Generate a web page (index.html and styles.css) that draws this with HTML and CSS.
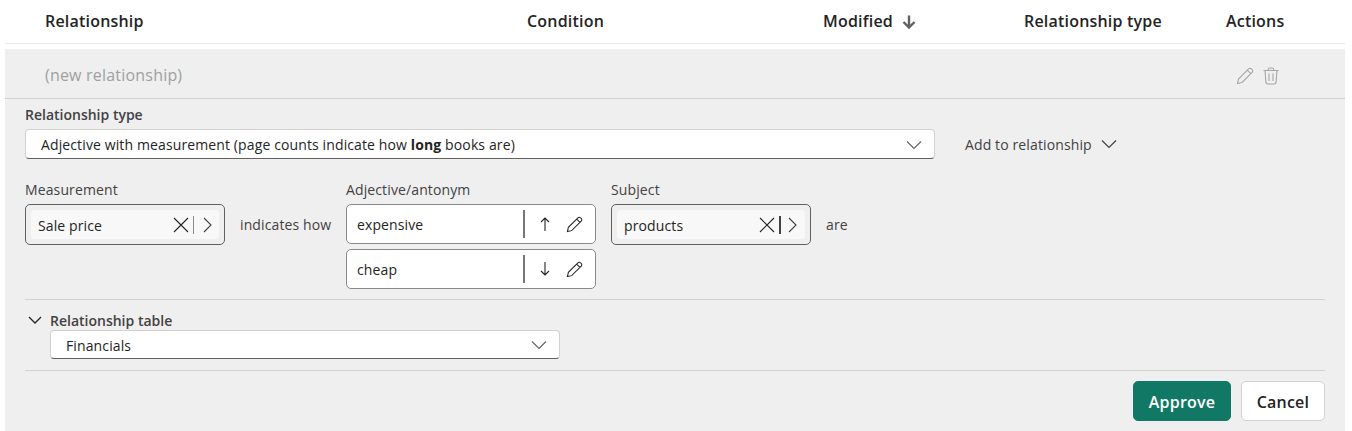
FILE: index.html
```html
<!DOCTYPE html>
<html lang="en">
<head>
<meta charset="utf-8">
<title>Relationships</title>
<link rel="stylesheet" href="styles.css">
</head>
<body>
<div class="page">
  <div class="head">
    <div class="h-rel">Relationship</div>
    <div class="h-cond">Condition</div>
    <div class="h-mod">Modified
      <svg class="sort" width="14" height="16" viewBox="0 0 14 16"><path d="M7 1.5v12M1.5 8l5.5 5.5L12.5 8" fill="none" stroke="#616161" stroke-width="2.4"/></svg>
    </div>
    <div class="h-type">Relationship type</div>
    <div class="h-act">Actions</div>
  </div>
  <div class="panel">
    <div class="row">
      <div class="new">(new relationship)</div>
      <div class="row-icons">
        <svg width="18" height="18" viewBox="0 0 18 18"><path d="M1.5 16.5l1-4.5L12.6 1.9a1.9 1.9 0 0 1 2.8 0l.7.7a1.9 1.9 0 0 1 0 2.8L6 15.5z M11.3 3.2l3.5 3.5" fill="none" stroke="#a6a6a6" stroke-width="1.1"/></svg>
        <svg width="18" height="18" viewBox="0 0 18 18"><path d="M1.5 3.5h15M6.2 3.5V2.4A1.4 1.4 0 0 1 7.6 1h2.8a1.4 1.4 0 0 1 1.4 1.4v1.1M3 3.5l.9 11.6A2 2 0 0 0 5.9 17h6.2a2 2 0 0 0 2-1.9L15 3.5M7 6.5v7.5M11 6.5v7.5" fill="none" stroke="#a6a6a6" stroke-width="1.1"/></svg>
      </div>
    </div>
    <div class="form">
      <div class="type-label">Relationship type</div>
      <div class="type-line">
        <div class="select wide">
          <span>Adjective with measurement (page counts indicate how <b>long</b> books are)</span>
          <svg class="chev" width="16" height="10" viewBox="0 0 16 10"><path d="M1 1.5l7 7 7-7" fill="none" stroke="#616161" stroke-width="1.1"/></svg>
        </div>
        <div class="add">Add to relationship
          <svg width="16" height="10" viewBox="0 0 16 10"><path d="M1 1.5l7 7 7-7" fill="none" stroke="#424242" stroke-width="1.2"/></svg>
        </div>
      </div>
      <div class="builder">
        <div class="col">
          <div class="lbl">Measurement</div>
          <div class="picker">
            <div class="chip">
              <span class="chip-text">Sale price</span>
              <svg width="16" height="16" viewBox="0 0 16 16"><path d="M1 1l14 14M15 1L1 15" fill="none" stroke="#242424" stroke-width="1.1"/></svg>
              <i class="bar"></i>
              <svg class="gt" width="9" height="16" viewBox="0 0 9 16"><path d="M1 1l7 7-7 7" fill="none" stroke="#424242" stroke-width="1.1"/></svg>
            </div>
          </div>
        </div>
        <div class="word w1">indicates how</div>
        <div class="col">
          <div class="lbl">Adjective/antonym</div>
          <div class="stack">
            <div class="adj">
              <span class="adj-text">expensive</span>
              <i class="vline"></i>
              <svg class="arrow" width="10" height="14" viewBox="0 0 10 14"><path d="M5 14V1M1 5l4-4 4 4" fill="none" stroke="#242424" stroke-width="1.1"/></svg>
              <svg class="pen" width="17" height="17" viewBox="0 0 18 18"><path d="M1.5 16.5l1-4.5L12.6 1.9a1.9 1.9 0 0 1 2.8 0l.7.7a1.9 1.9 0 0 1 0 2.8L6 15.5z M11.3 3.2l3.5 3.5" fill="none" stroke="#242424" stroke-width="1.1"/></svg>
            </div>
            <div class="adj">
              <span class="adj-text">cheap</span>
              <i class="vline"></i>
              <svg class="arrow" width="10" height="14" viewBox="0 0 10 14"><path d="M5 0v13M1 9l4 4 4-4" fill="none" stroke="#242424" stroke-width="1.1"/></svg>
              <svg class="pen" width="17" height="17" viewBox="0 0 18 18"><path d="M1.5 16.5l1-4.5L12.6 1.9a1.9 1.9 0 0 1 2.8 0l.7.7a1.9 1.9 0 0 1 0 2.8L6 15.5z M11.3 3.2l3.5 3.5" fill="none" stroke="#242424" stroke-width="1.1"/></svg>
            </div>
          </div>
        </div>
        <div class="col subj">
          <div class="lbl">Subject</div>
          <div class="picker">
            <div class="chip">
              <span class="chip-text">products</span>
              <svg width="16" height="16" viewBox="0 0 16 16"><path d="M1 1l14 14M15 1L1 15" fill="none" stroke="#242424" stroke-width="1.1"/></svg>
              <i class="bar dark"></i>
              <svg class="gt" width="9" height="16" viewBox="0 0 9 16"><path d="M1 1l7 7-7 7" fill="none" stroke="#424242" stroke-width="1.1"/></svg>
            </div>
          </div>
        </div>
        <div class="word w2">are</div>
      </div>
      <div class="table-sec">
        <div class="table-head">
          <svg width="14" height="8" viewBox="0 0 14 8"><path d="M1 1l6 6 6-6" fill="none" stroke="#242424" stroke-width="1.3"/></svg>
          <span class="table-label">Relationship table</span>
        </div>
        <div class="select narrow">
          <span>Financials</span>
          <svg class="chev" width="16" height="10" viewBox="0 0 16 10"><path d="M1 1.5l7 7 7-7" fill="none" stroke="#616161" stroke-width="1.1"/></svg>
        </div>
      </div>
      <div class="actions">
        <button class="btn primary">Approve</button>
        <button class="btn">Cancel</button>
      </div>
    </div>
  </div>
</div>
</body>
</html>
```

FILE: styles.css
```css
* { box-sizing: border-box; }
html, body { margin: 0; padding: 0; background: #fff; }
body {
  font-family: "Open Sans", "Noto Sans", "Liberation Sans", sans-serif;
  color: #242424;
  overflow: hidden;
}
.page { margin: 0 7px 0 5px; height: 431px; display: flex; flex-direction: column; }
.head {
  display: grid;
  grid-template-columns: 482px 296px 201px 202px 1fr;
  padding-left: 40px;
  height: 44px;
  border-bottom: 1px solid #e8e8e8;
  align-items: center;
  font-size: 16px;
  font-weight: 600;
  letter-spacing: 0.2px;
  padding-bottom: 1px;
}
.h-mod { display: flex; align-items: center; gap: 9px; }
.sort { margin-top: 2px; }
.panel { margin-top: 5px; flex: 1; background: #efefef; display: flex; flex-direction: column; }
.row {
  height: 50px;
  flex: none;
  border-bottom: 1px solid #d1d1d1;
  display: flex;
  align-items: center;
  justify-content: space-between;
  padding: 3px 65px 0 40px;
}
.new { color: #a0a0a0; font-size: 16px; letter-spacing: 0.2px; }
.row-icons { display: flex; gap: 8px; margin-top: 2px; }
.form { padding: 7px 20px 0; flex: 1; display: flex; flex-direction: column; font-size: 14px; letter-spacing: 0.12px; }
.type-label { font-weight: 600; color: #424242; height: 23px; line-height: 18px; letter-spacing: 0; }
.type-line { display: flex; align-items: center; height: 30px; }
.select {
  height: 30px;
  background: #fff;
  border: 1px solid #d1d1d1;
  border-bottom-color: #616161;
  border-radius: 4px;
  display: flex;
  align-items: center;
  justify-content: space-between;
  padding: 1px 12px 0 15px;
}
.wide { width: 910px; }
.narrow { width: 510px; height: 29px; }
.add { margin-left: 30px; display: flex; align-items: center; gap: 9px; color: #424242; }
.builder { display: flex; align-items: flex-start; margin-top: 21px; height: 120px; border-bottom: 1px solid #d1d1d1; }
.lbl { color: #424242; height: 24px; line-height: 20px; margin-bottom: 0; }
.col { display: flex; flex-direction: column; }
.subj { margin-left: 15px; }
.picker {
  width: 200px;
  height: 41px;
  border: 1px solid #616161;
  border-radius: 5px;
  padding: 5px;
}
.chip {
  height: 29px;
  background: #f8f8f8;
  border-radius: 4px;
  display: flex;
  align-items: center;
  padding: 0 7px 0 7px;
}
.chip-text { flex: 1; padding-top: 1px; }
.bar { width: 1px; height: 18px; background: #8a8a8a; margin: 0 9px 0 4px; }
.bar.dark { width: 2px; background: #424242; margin: 0 7px 0 4px; }
.subj .chip { padding-right: 8px; }
.word { color: #424242; margin-top: 36px; margin-left: 15px; line-height: 18px; }
.w1 { width: 91px; margin-right: 15px; white-space: nowrap; }
.stack { display: flex; flex-direction: column; gap: 5px; }
.adj {
  width: 250px;
  height: 40px;
  background: #fff;
  border: 1px solid #8a8a8a;
  border-radius: 5px;
  display: flex;
  align-items: center;
  padding: 0 12px 0 10px;
}
.adj-text { flex: 1; }
.vline { width: 2px; height: 28px; background: #777; margin-right: 15px; }
.arrow { margin-right: 16px; }
.table-sec { padding-top: 10px; height: 71px; border-bottom: 1px solid #d1d1d1; }
.table-head { display: flex; align-items: center; height: 20px; padding-left: 3px; }
.table-label { margin-left: 8px; font-weight: 600; color: #424242; letter-spacing: 0; }
.table-sec .select { margin-left: 25px; }
.actions { display: flex; justify-content: flex-end; gap: 10px; padding-top: 10px; }
.btn {
  height: 40px;
  width: 84px;
  border: 1px solid #d1d1d1;
  border-radius: 5px;
  background: #fff;
  color: #242424;
  font-family: inherit;
  font-size: 16px;
  font-weight: 600;
  letter-spacing: 0.2px;
  padding: 2px 0 0;
}
.primary { width: 98px; background: #117865; border-color: #117865; color: #fff; }
```
